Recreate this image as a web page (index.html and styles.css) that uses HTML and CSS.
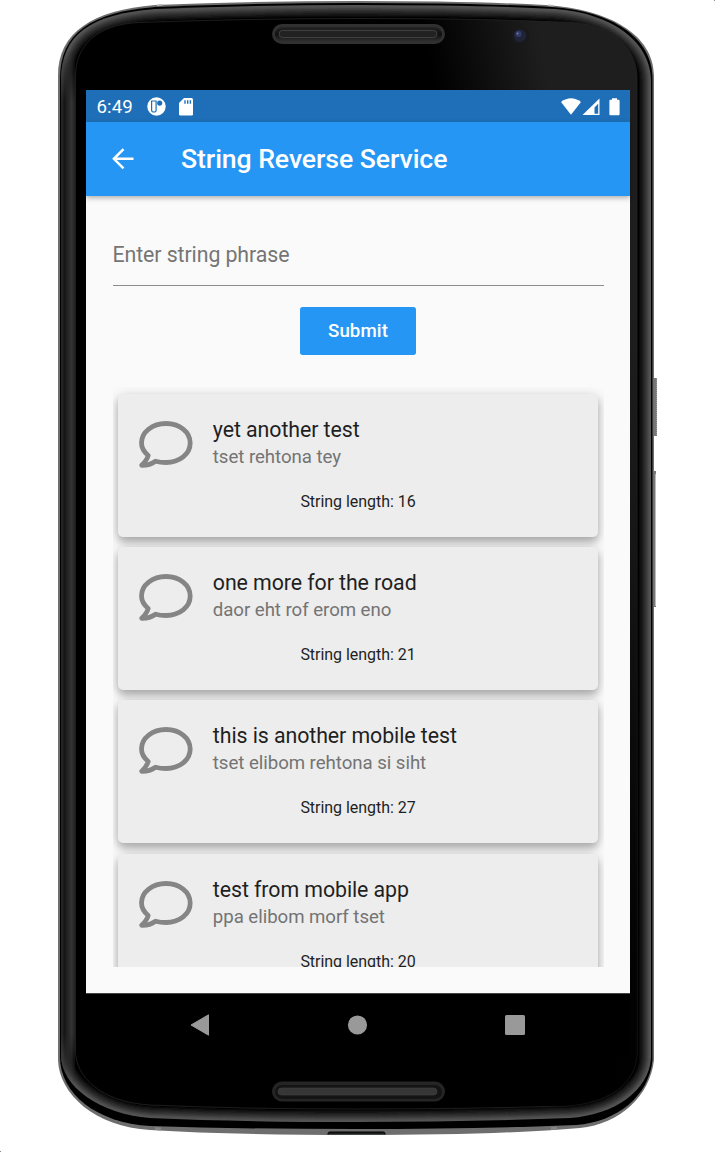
FILE: index.html
```html
<!DOCTYPE html>
<html lang="en">
<head>
<meta charset="utf-8">
<title>String Reverse Service</title>
<link rel="stylesheet" href="styles.css">
</head>
<body>
<div class="device">
  <svg class="frame" viewBox="0 0 715 1152" aria-hidden="true">
    <defs>
      <linearGradient id="face" x1="430" y1="60" x2="540" y2="40" gradientUnits="userSpaceOnUse"><stop offset="0" stop-color="#000"/><stop offset="1" stop-color="#1e1e1e"/></linearGradient>
      <linearGradient id="fade" x1="0" y1="300" x2="0" y2="1000" gradientUnits="userSpaceOnUse"><stop offset="0" stop-color="#000" stop-opacity="0"/><stop offset="1" stop-color="#000" stop-opacity=".78"/></linearGradient>
      <linearGradient id="leftRail" x1="61" y1="0" x2="75" y2="0" gradientUnits="userSpaceOnUse"><stop offset="0" stop-color="#282828"/><stop offset=".25" stop-color="#161616"/><stop offset=".75" stop-color="#343434"/><stop offset="1" stop-color="#222"/></linearGradient>
      <linearGradient id="railMask" x1="0" y1="50" x2="0" y2="1085" gradientUnits="userSpaceOnUse"><stop offset="0" stop-color="#000"/><stop offset=".05" stop-color="#fff"/><stop offset=".95" stop-color="#fff"/><stop offset="1" stop-color="#000"/></linearGradient>
      <mask id="railFade"><path fill="url(#railMask)" d="M60 40h20v1055H60z"/></mask>
      <linearGradient id="slot" x1="0" y1="0" x2="0" y2="1"><stop offset="0" stop-color="#242424"/><stop offset=".5" stop-color="#101010"/><stop offset="1" stop-color="#323232"/></linearGradient>
      <filter id="soft" x="-5%" y="-5%" width="110%" height="110%"><feGaussianBlur stdDeviation="1.500"/></filter>
      <clipPath id="bezelClip"><path d="M61 80C61 35 90 14 155 9Q260 5 356 5Q480 5 555 9C610 13 651 40 651 82V1058C649 1090 615 1115 570 1118Q470 1122 356 1122Q240 1122 150 1118C100 1114 61 1087 61 1055Z"/></clipPath>
    </defs>
    <path fill="#777" d="M652 378h5v58h-5zM652 471h4v136h-4z"/>
    <path fill="none" stroke="#999" stroke-dasharray="1 1" d="M656.500 378v58"/>
    <path fill="#bbb" d="M655 474h1v132h-1z"/>
    <path fill="#6e6e6e" d="M58 76C58 32 93 10 155 5Q260 1 356 1Q470 1 545 5C610 9 654 35 654 76V1060C650 1096 620 1124 580 1128Q500 1135 356 1135Q230 1135 150 1130C95 1127 59 1094 58 1060Z"/>
    <path fill="#000" d="M60 78C60 33.500 91 12 155 7Q260 3 356 3Q478 3 552 7C611 11 652.500 37 652.500 79V1060C649 1096 617 1122 576 1125Q480 1129 356 1129Q240 1129 150 1126C97 1123 60 1094 60 1057Z"/>
    <g clip-path="url(#bezelClip)">
      <path d="M60 0h594v1135H60z"/>
      <g fill="none" filter="url(#soft)">
        <path stroke="#1e1e1e" stroke-width="21" d="M61 80C61 35 90 14 155 9Q260 5 356 5Q480 5 555 9C610 13 651 40 651 82V1058C649 1090 615 1115 570 1118Q470 1122 356 1122Q240 1122 150 1118C100 1114 61 1087 61 1055Z"/>
        <path stroke="#363636" stroke-width="13" d="M61 80C61 35 90 14 155 9Q260 5 356 5Q480 5 555 9C610 13 651 40 651 82V1058C649 1090 615 1115 570 1118Q470 1122 356 1122Q240 1122 150 1118C100 1114 61 1087 61 1055Z"/>
        <path stroke="#545454" stroke-width="6" d="M61 80C61 35 90 14 155 9Q260 5 356 5Q480 5 555 9C610 13 651 40 651 82V1058C649 1090 615 1115 570 1118Q470 1122 356 1122Q240 1122 150 1118C100 1114 61 1087 61 1055Z"/>
      </g>
      <path fill="url(#leftRail)" mask="url(#railFade)" d="M61 40h14v1055H61z"/>
    </g>
    <path fill="url(#face)" stroke="#242424" stroke-width=".8" d="M75.500 75C76 46 96 25 138 22.500Q250 18.500 356 18.500Q490 18.500 570 22.500C612 25 637 48 637 78V1052C637 1085 606 1104 564 1106Q470 1109 356 1109Q240 1109 150 1105C100 1102 75.500 1076 75.500 1051Z"/>
    <path fill="url(#fade)" d="M630 300h7v752c0 33-31 52-73 54H356V1000h274z"/>
    <g>
      <rect x="272" y="24" width="173" height="20" rx="10" fill="#303030"/><rect x="275" y="27" width="167" height="15" rx="7.500" fill="url(#slot)"/><rect x="279" y="30.500" width="158" height="7" rx="3.500" fill="#222" stroke="#484848" stroke-width=".8"/>
      <rect x="272" y="1081.500" width="173" height="20" rx="10" fill="#252525"/><rect x="275" y="1085" width="167" height="14" rx="7" fill="#141414"/><rect x="278" y="1088" width="159" height="7" rx="3.500" fill="#363636" stroke="#444" stroke-width=".6"/>
      <circle cx="520" cy="36" r="9" fill="#191919"/><circle cx="520" cy="35.500" r="6.300" fill="#20243a"/><circle cx="518.500" cy="34" r="3" fill="#343c66"/><circle cx="517.500" cy="33.500" r=".9" fill="#7880a8"/>
      <path fill="#1b1f1f" stroke="#000" d="M328 1134.500v-1q0-1.500 2-1.500h53q2 0 2 1.500v1"/>
      <path fill="#bbb" d="M157 4.500l6-.4v1.400l-6 .5zM548 4.500l6 .5v1.500l-6-.5z"/>
      <path fill="#858585" d="M155 1127l6 .4v3l-6-.4zM551 1127l6-.4v3l-6 .4z"/>
    </g>
    <path fill="#888" d="M714 0h1v1h-1zM0 1151h1v1H0z"/>
  </svg>
  <main class="screen">
    <header class="status">
      <span class="clock">6:49</span>
      <svg class="dot-icon" viewBox="0 0 19 19"><circle cx="9.500" cy="9.500" r="9.200" fill="#fff"/><path fill="none" stroke="#1e6fb8" stroke-width="1.200" d="M4.600 4h4.500v9.200q0 1.800-2.200 1.800t-2.300-1.800z"/><circle cx="12.700" cy="6.100" r="2.600" fill="#1e6fb8"/></svg>
      <svg class="sd-icon" viewBox="0 0 14 18"><path fill="#fff" d="M5 0h7.500Q14 0 14 1.500v14.700q0 1.300-1.500 1.300h-11Q0 17.500 0 16.200V5z"/><path stroke="#1e6fb8" stroke-width="1.400" d="M6 2.200v3.500M8.700 2.200v3.500M11.400 2.200v3.500"/></svg>
      <span class="spacer"></span>
      <svg class="signals" viewBox="0 0 60 18"><path fill="#fff" d="M0 4Q10-3.500 20 4L10 16.800z"/><path fill="#fff" fill-rule="evenodd" d="M38.500.5V17H21.500zM37.200 5.700L33.500 9.400v6.300h3.700z"/><path fill="#fff" d="M51 .2h5v1.600h1.600q1 0 1 1v13.400q0 1-1 1h-8.200q-1 0-1-1V2.800q0-1 1-1H51z"/></svg>
    </header>
    <div class="appbar">
      <svg class="back" viewBox="0 0 22 22"><path fill="none" stroke="#fff" stroke-width="2.500" d="M21.500 10.800H2M11.500 1.200L1.900 10.800l9.600 9.600"/></svg>
      <h1>String Reverse Service</h1>
    </div>
    <section class="content">
      <div class="field">Enter string phrase</div>
      <button class="submit">Submit</button>
      <div class="list">
        <article class="card">
          <svg class="bubble" viewBox="0 0 54 48"><path d="M27 2.500C13.500 2.500 2.500 11 2.500 21.800C2.500 26.500 5 31 9.200 34.500Q8 39 2.800 44.300Q10.500 44.500 16.500 40.200Q21.500 41.500 27 41.500C40.500 41.500 51.200 33 51.200 22S40.500 2.500 27 2.500Z"/></svg>
          <div class="words"><div class="phrase">yet another test</div><div class="reversed">tset rehtona tey</div></div>
          <div class="length">String length: 16</div>
        </article>
        <article class="card">
          <svg class="bubble" viewBox="0 0 54 48"><path d="M27 2.500C13.500 2.500 2.500 11 2.500 21.800C2.500 26.500 5 31 9.200 34.500Q8 39 2.800 44.300Q10.500 44.500 16.500 40.200Q21.500 41.500 27 41.500C40.500 41.500 51.200 33 51.200 22S40.500 2.500 27 2.500Z"/></svg>
          <div class="words"><div class="phrase">one more for the road</div><div class="reversed">daor eht rof erom eno</div></div>
          <div class="length">String length: 21</div>
        </article>
        <article class="card">
          <svg class="bubble" viewBox="0 0 54 48"><path d="M27 2.500C13.500 2.500 2.500 11 2.500 21.800C2.500 26.500 5 31 9.200 34.500Q8 39 2.800 44.300Q10.500 44.500 16.500 40.200Q21.500 41.500 27 41.500C40.500 41.500 51.200 33 51.200 22S40.500 2.500 27 2.500Z"/></svg>
          <div class="words"><div class="phrase">this is another mobile test</div><div class="reversed">tset elibom rehtona si siht</div></div>
          <div class="length">String length: 27</div>
        </article>
        <article class="card">
          <svg class="bubble" viewBox="0 0 54 48"><path d="M27 2.500C13.500 2.500 2.500 11 2.500 21.800C2.500 26.500 5 31 9.200 34.500Q8 39 2.800 44.300Q10.500 44.500 16.500 40.200Q21.500 41.500 27 41.500C40.500 41.500 51.200 33 51.200 22S40.500 2.500 27 2.500Z"/></svg>
          <div class="words"><div class="phrase">test from mobile app</div><div class="reversed">ppa elibom morf tset</div></div>
          <div class="length">String length: 20</div>
        </article>
      </div>
    </section>
    <nav class="nav">
      <svg viewBox="0 0 22 22"><path fill="#999" stroke="#999" stroke-linejoin="round" d="M2 11L19.500.8v20.400z"/></svg>
      <svg viewBox="0 0 22 22"><circle cx="11.500" cy="11" r="9.600" fill="#999"/></svg>
      <svg viewBox="0 0 22 22"><rect x="1" y="1" width="20" height="20" rx="1.500" fill="#999"/></svg>
    </nav>
  </main>
</div>
</body>
</html>
```
FILE: styles.css
```css
* { box-sizing: border-box; }
body { margin: 0; background: #fff; font-family: Roboto, "Liberation Sans", sans-serif; }
svg { display: block; flex: none; }
.device { position: relative; width: 715px; height: 1152px; padding: 90px 85px 95px 86px; overflow: hidden; }
.frame { position: absolute; inset: 0; width: 715px; height: 1152px; }
.screen { position: relative; width: 544px; height: 967px; display: flex; flex-direction: column; background: #fafafa; }
.status { height: 32px; background: #1e6fb8; display: flex; align-items: center; padding: 1px 9px 0 10.5px; color: #fff; }
.clock { font-size: 18.67px; width: 50.500px; letter-spacing: .1px; }
.dot-icon { width: 19px; height: 19px; }
.sd-icon { width: 14px; height: 18px; margin-left: 12.500px; }
.spacer { flex: 1; }
.signals { width: 60px; height: 18px; }
.appbar { position: relative; height: 73.500px; background: #2596f3; display: flex; align-items: center; padding-left: 26px; color: #fff; box-shadow: 0 2px 5px rgba(0, 0, 0, .3); }
.back { width: 22px; height: 22px; }
h1 { margin: 1px 0 0 47px; font-size: 26.67px; font-weight: 500; line-height: 32px; letter-spacing: -.09px; white-space: nowrap; }
.content { height: 797.500px; padding: 0 26.500px; display: flex; flex-direction: column; align-items: center; }
.field { width: 491px; height: 90.500px; padding-top: 46.500px; font-size: 21.33px; line-height: 26px; letter-spacing: -.09px; color: #757575; border-bottom: 1.330px solid #8c8c8c; flex: none; }
.submit { margin: 21px 0 0; width: 116px; height: 47.500px; padding: 0; border: 0; border-radius: 2.700px; background: #2596f3; color: #fff; font: 500 18.67px/48px Roboto, sans-serif; letter-spacing: .1px; flex: none; }
.list { width: 491px; height: 580px; margin-top: 32.500px; padding: 6.500px 5.300px 0; overflow: hidden; flex: none; }
.card { height: 143px; margin-bottom: 10.400px; padding: 22px 21px 0; border-radius: 5px; background: #ededed; box-shadow: 0 5px 7px rgba(0, 0, 0, .2), 0 3px 14px rgba(0, 0, 0, .2); display: grid; grid-template-columns: 74px 1fr; grid-template-rows: 73px 26px; }
.bubble { width: 54px; height: 48px; margin-top: 5px; }
.bubble path { fill: none; stroke: #858585; stroke-width: 4.800; stroke-linejoin: round; }
.phrase { font-size: 21.33px; line-height: 28px; letter-spacing: -.07px; color: #1f1f1f; white-space: nowrap; }
.reversed { font-size: 18.67px; line-height: 26px; letter-spacing: -.05px; color: #747474; white-space: nowrap; }
.length { grid-column: 1 / -1; text-align: center; font-size: 16px; line-height: 26px; letter-spacing: -.04px; color: #1f1f1f; }
.nav { height: 64px; background: #000; border-top: 1px solid #444; display: flex; align-items: center; padding: 0 104.500px 2px 102.500px; justify-content: space-between; }
.nav svg { width: 22px; height: 22px; }
```
